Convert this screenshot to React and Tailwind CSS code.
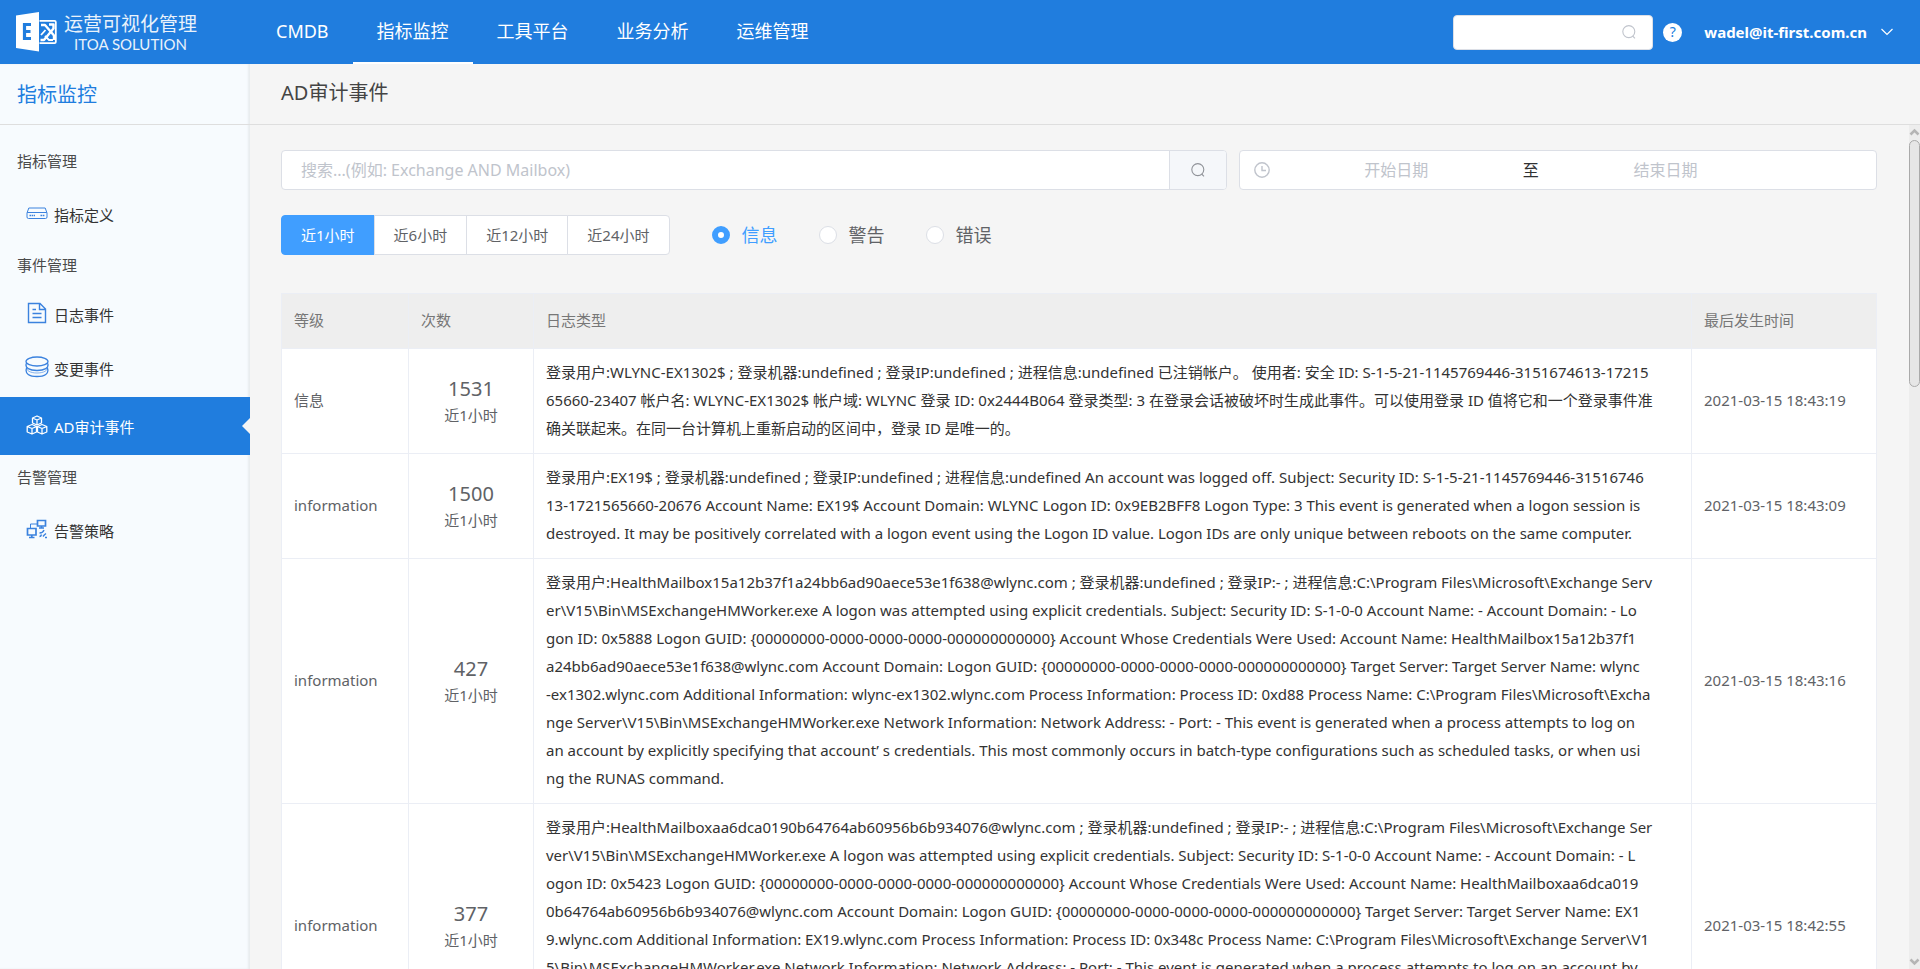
import { useState } from 'react'
import clsx from 'clsx'

const NAV = ['CMDB', '指标监控', '工具平台', '业务分析', '运维管理']
const RANGES = ['近1小时', '近6小时', '近12小时', '近24小时']
const LEVELS = ['信息', '警告', '错误']

const EVENTS = [
  {
    level: '信息',
    count: 1531,
    time: '2021-03-15 18:43:19',
    lines: [
      '登录用户:WLYNC-EX1302$ ; 登录机器:undefined ; 登录IP:undefined ; 进程信息:undefined 已注销帐户。 使用者: 安全 ID: S-1-5-21-1145769446-3151674613-17215',
      '65660-23407 帐户名: WLYNC-EX1302$ 帐户域: WLYNC 登录 ID: 0x2444B064 登录类型: 3 在登录会话被破坏时生成此事件。可以使用登录 ID 值将它和一个登录事件准',
      '确关联起来。在同一台计算机上重新启动的区间中，登录 ID 是唯一的。',
    ],
  },
  {
    level: 'information',
    count: 1500,
    time: '2021-03-15 18:43:09',
    lines: [
      '登录用户:EX19$ ; 登录机器:undefined ; 登录IP:undefined ; 进程信息:undefined An account was logged off. Subject: Security ID: S-1-5-21-1145769446-31516746',
      '13-1721565660-20676 Account Name: EX19$ Account Domain: WLYNC Logon ID: 0x9EB2BFF8 Logon Type: 3 This event is generated when a logon session is',
      'destroyed. It may be positively correlated with a logon event using the Logon ID value. Logon IDs are only unique between reboots on the same computer.',
    ],
  },
  {
    level: 'information',
    count: 427,
    time: '2021-03-15 18:43:16',
    lines: [
      '登录用户:HealthMailbox15a12b37f1a24bb6ad90aece53e1f638@wlync.com ; 登录机器:undefined ; 登录IP:- ; 进程信息:C:\\Program Files\\Microsoft\\Exchange Serv',
      'er\\V15\\Bin\\MSExchangeHMWorker.exe A logon was attempted using explicit credentials. Subject: Security ID: S-1-0-0 Account Name: - Account Domain: - Lo',
      'gon ID: 0x5888 Logon GUID: {00000000-0000-0000-0000-000000000000} Account Whose Credentials Were Used: Account Name: HealthMailbox15a12b37f1',
      'a24bb6ad90aece53e1f638@wlync.com Account Domain: Logon GUID: {00000000-0000-0000-0000-000000000000} Target Server: Target Server Name: wlync',
      '-ex1302.wlync.com Additional Information: wlync-ex1302.wlync.com Process Information: Process ID: 0xd88 Process Name: C:\\Program Files\\Microsoft\\Excha',
      'nge Server\\V15\\Bin\\MSExchangeHMWorker.exe Network Information: Network Address: - Port: - This event is generated when a process attempts to log on',
      'an account by explicitly specifying that account’ s credentials. This most commonly occurs in batch-type configurations such as scheduled tasks, or when usi',
      'ng the RUNAS command.',
    ],
  },
  {
    level: 'information',
    count: 377,
    time: '2021-03-15 18:42:55',
    lines: [
      '登录用户:HealthMailboxaa6dca0190b64764ab60956b6b934076@wlync.com ; 登录机器:undefined ; 登录IP:- ; 进程信息:C:\\Program Files\\Microsoft\\Exchange Ser',
      'ver\\V15\\Bin\\MSExchangeHMWorker.exe A logon was attempted using explicit credentials. Subject: Security ID: S-1-0-0 Account Name: - Account Domain: - L',
      'ogon ID: 0x5423 Logon GUID: {00000000-0000-0000-0000-000000000000} Account Whose Credentials Were Used: Account Name: HealthMailboxaa6dca019',
      '0b64764ab60956b6b934076@wlync.com Account Domain: Logon GUID: {00000000-0000-0000-0000-000000000000} Target Server: Target Server Name: EX1',
      '9.wlync.com Additional Information: EX19.wlync.com Process Information: Process ID: 0x348c Process Name: C:\\Program Files\\Microsoft\\Exchange Server\\V1',
      '5\\Bin\\MSExchangeHMWorker.exe Network Information: Network Address: - Port: - This event is generated when a process attempts to log on an account by',
      'explicitly specifying that account’ s credentials. This most commonly occurs in batch-type configurations such as scheduled tasks, or when using the RUN',
      'AS command.',
    ],
  },
]

function DriveIcon() {
  return (
    <svg width="22" height="22" viewBox="0 0 22 22" fill="none" stroke="currentColor" strokeWidth="1">
      <path d="M1 11 L2.8 6 H19.2 L21 11 V15 Q21 16.5 19.5 16.5 H2.5 Q1 16.5 1 15 Z M1.2 10.5 H20.8" />
      <path d="M3.5 13.5 H9 M14.5 13.5 H19" strokeWidth="1.6" strokeDasharray="1.6 0.6" />
    </svg>
  )
}

function FileIcon() {
  return (
    <svg width="22" height="22" viewBox="0 0 22 22" fill="none" stroke="currentColor" strokeWidth="1.4">
      <path d="M2.5 1.5 H14 L19.5 7 V20.5 H2.5 Z M13.5 1.5 V7.5 H19.5" />
      <path d="M6.5 7.5 H10 M6.5 11.5 H15.5 M6.5 15.5 H15.5" />
    </svg>
  )
}

function DatabaseIcon() {
  return (
    <svg width="24" height="22" viewBox="0 0 24 22" fill="none" stroke="currentColor" strokeWidth="1.3">
      <ellipse cx="12" cy="5.5" rx="11" ry="4.5" />
      <path d="M1.6 7 C-1 12 5 14.5 12 14.5 S25 12 22.4 7" />
      <path d="M1.8 11.5 C-1 18 5 20.5 12 20.5 S25 18 22.2 11.5" />
      <path d="M1.6 9.5 C0 15 6 17 12 17 S24 15 22.4 9.5" strokeWidth="0.6" />
    </svg>
  )
}

function CubesIcon() {
  return (
    <svg width="22" height="20" viewBox="0 0 22 20" fill="none" stroke="currentColor" strokeWidth="1.3" strokeLinejoin="round">
      <path d="M11 1 L15.5 3 V8 L11 10 L6.5 8 V3 Z M6.5 3 L11 5 L15.5 3 M11 5 V10" />
      <path d="M6 9.5 L10.5 11.5 V17 L6 19 L1.2 17 V11.5 Z M1.2 11.5 L6 13.5 L10.5 11.5 M6 13.5 V19" />
      <path d="M16 9.5 L20.8 11.5 V17 L16 19 L11.5 17 V11.5 Z M11.5 11.5 L16 13.5 L20.8 11.5 M16 13.5 V19" />
    </svg>
  )
}

function PolicyIcon() {
  return (
    <svg width="22" height="20" viewBox="0 0 22 20" fill="none" stroke="currentColor" strokeWidth="1.7">
      <path d="M11.5 1.5 H19.5 V7 H11.5 Z M15.5 7 V9 M13 9 H18" />
      <path d="M1.5 9.5 H10 V16 H1.5 Z M5.8 16 V18.3 M3 18.5 H8.5" />
      <path d="M4.5 9.5 V5 H11.5" strokeWidth="1" />
      <path d="M13.5 14 Q17 14 18 11 M13.5 17.5 Q15 17.5 15.5 15.5 M17 17.5 Q18 16 20 14.5 M19 18.5 H21" strokeWidth="1.4" />
    </svg>
  )
}

const MENU = [
  {
    title: '指标管理',
    items: [{ label: '指标定义', icon: DriveIcon, tall: true }],
  },
  {
    title: '事件管理',
    items: [
      { label: '日志事件', icon: FileIcon },
      { label: '变更事件', icon: DatabaseIcon },
      { label: 'AD审计事件', icon: CubesIcon, tall: true, active: true },
    ],
  },
  {
    title: '告警管理',
    items: [{ label: '告警策略', icon: PolicyIcon, tall: true }],
  },
]

function SearchIcon() {
  return (
    <svg width="14" height="14" viewBox="0 0 14 14" fill="none" stroke="currentColor" strokeWidth="1.1">
      <circle cx="6.8" cy="6.6" r="6" />
      <path d="M10.6 11 L13 13.4" />
    </svg>
  )
}

function Logo() {
  return (
    <a href="#" className="flex w-[250px] shrink-0 items-center pl-4 text-white">
      <svg width="42" height="40" viewBox="0 0 42 40" className="shrink-0">
        <path d="M23.5 8.8 H38.5 Q39.8 8.8 39.8 10 V30 Q39.8 31.2 38.5 31.2 H23.5" fill="none" stroke="#fff" strokeWidth="1.8" />
        <g fill="none" stroke="#fff" strokeWidth="2.4" strokeLinejoin="round">
          <path d="M25 13 H29 L38 23.5 V28" />
          <path d="M33 12.5 H37.5 V16.5 L28 28 H24.5" />
          <path d="M25 23 L29.5 18 M29 24 L33 28 H37" strokeWidth="1.8" />
        </g>
        <path d="M0 3.5 L23 0 V39.5 L0 36 Z" fill="#fff" />
        <path d="M15 12.5 H8.5 V26.5 H15 M8.5 19.5 H14.5" fill="none" stroke="#207dde" strokeWidth="3.2" />
      </svg>
      <span className="ml-1.5 flex flex-col items-center">
        <span className="text-[19px] leading-6 opacity-90">运营可视化管理</span>
        <span className="font-[Lato] text-[15px] leading-4 opacity-90">ITOA SOLUTION</span>
      </span>
    </a>
  )
}

function Header() {
  return (
    <header className="flex h-16 shrink-0 bg-[#207dde] text-white">
      <Logo />
      <nav className="ml-0.5 flex text-lg">
        {NAV.map((item) => (
          <a
            key={item}
            href="#"
            className={clsx(
              'flex items-center border-b-2 px-6',
              item === '指标监控' ? 'border-white' : 'border-transparent',
            )}
          >
            {item}
          </a>
        ))}
      </nav>
      <div className="ml-auto flex items-center pr-[27px]">
        <label className="flex h-[35px] w-[200px] items-center rounded border border-[#dcdfe6] bg-white pr-4 text-[#c0c4cc]">
          <input aria-label="搜索" className="min-w-0 flex-1 px-3 text-sm text-[#606266] outline-none" />
          <SearchIcon />
        </label>
        <button
          aria-label="帮助"
          className="ml-2.5 flex h-[19px] w-[19px] items-center justify-center rounded-full bg-white text-sm leading-none text-[#207dde]"
        >
          ?
        </button>
        <button className="ml-[22px] flex items-center gap-3.5 text-[15px] font-bold">
          wadel@it-first.com.cn
          <svg width="12" height="8" viewBox="0 0 12 8" fill="none" stroke="currentColor" strokeWidth="1.2">
            <path d="M0.5 1 L6 6.5 L11.5 1" />
          </svg>
        </button>
      </div>
    </header>
  )
}

function Sidebar() {
  return (
    <aside className="w-[250px] shrink-0 bg-[#f7fbfe] text-[15px] shadow-[inset_-2px_0_2px_#e8ecef]">
      <h2 className="mb-3.5 h-[61px] border-b border-[#dedede] pl-[17px] text-xl leading-[62px] text-[#207dde]">指标监控</h2>
      {MENU.map((group) => (
        <section key={group.title}>
          <h3 className="pb-0.5 pl-[17px] leading-[44px] text-[#4a4a4a]">{group.title}</h3>
          {group.items.map(({ label, icon: Icon, tall, active }) => (
            <a
              key={label}
              href="#"
              className={clsx(
                'relative flex items-center gap-1 pl-6',
                tall ? 'h-[58px] pt-0.5' : 'h-[54px] pb-0.5',
                active ? 'bg-[#207dde] text-white' : 'text-[#333]',
              )}
            >
              <span className={clsx('flex w-[26px] justify-center pb-1', !active && 'text-[#3b82de]')}>
                <Icon />
              </span>
              {label}
              {active && (
                <span className="absolute top-1/2 right-0 -translate-y-1/2 border-y-8 border-r-8 border-transparent border-r-[#f5f5f5]" />
              )}
            </a>
          ))}
        </section>
      ))}
    </aside>
  )
}

function Filters() {
  const [range, setRange] = useState('近1小时')
  const [level, setLevel] = useState('信息')

  return (
    <>
      <div className="flex gap-3">
        <div className="flex h-10 min-w-0 flex-1 overflow-hidden rounded border border-[#dcdfe6] bg-white">
          <input
            aria-label="搜索"
            placeholder="搜索...(例如: Exchange AND Mailbox)"
            className="min-w-0 flex-1 px-[19px] text-base text-[#606266] outline-none placeholder:text-[#c0c4cc]"
          />
          <button
            aria-label="搜索"
            className="flex w-[57px] items-center justify-center border-l border-[#dcdfe6] bg-[#f5f7fa] text-[#909399]"
          >
            <SearchIcon />
          </button>
        </div>
        <div className="flex h-10 w-2/5 shrink-0 items-center rounded border border-[#dcdfe6] bg-white px-3.5 text-base">
          <svg width="16" height="16" viewBox="0 0 16 16" fill="none" stroke="#c0c4cc" strokeWidth="1.4" className="shrink-0">
            <circle cx="8" cy="8" r="7.2" />
            <path d="M8 4 V8.5 H12" />
          </svg>
          <input
            aria-label="开始日期"
            placeholder="开始日期"
            className="ml-2 w-[39%] text-center outline-none placeholder:text-[#c0c4cc]"
          />
          <span className="w-8 text-center text-[#303133]">至</span>
          <input
            aria-label="结束日期"
            placeholder="结束日期"
            className="w-[39%] text-center outline-none placeholder:text-[#c0c4cc]"
          />
        </div>
      </div>

      <div className="mt-[25px] flex items-center">
        <div className="flex h-10 text-[15px]">
          {RANGES.map((r) => (
            <button
              key={r}
              onClick={() => setRange(r)}
              className={clsx(
                'border px-[19px] not-first:-ml-px first:rounded-l last:rounded-r',
                r === range ? 'border-[#409eff] bg-[#409eff] text-white' : 'border-[#dcdfe6] bg-white text-[#606266]',
              )}
            >
              {r}
            </button>
          ))}
        </div>
        <div className="ml-[42px] flex gap-[41px] text-lg">
          {LEVELS.map((l) => (
            <label key={l} className={clsx('flex items-center gap-3', l === level ? 'text-[#409eff]' : 'text-[#606266]')}>
              <input
                type="radio"
                name="level"
                checked={l === level}
                onChange={() => setLevel(l)}
                className="h-[18px] w-[18px] appearance-none rounded-full border border-[#dcdfe6] bg-white checked:border-[6px] checked:border-[#409eff]"
              />
              {l}
            </label>
          ))}
        </div>
      </div>
    </>
  )
}

function EventTable() {
  const cell = 'border-r border-b border-[#ebeef5] px-3'
  return (
    <table className="mt-[38px] w-full table-fixed border-separate border-spacing-0 border-t border-l border-[#ebeef5] bg-white text-[15px] text-[#606266]">
      <colgroup>
        <col className="w-[127px]" />
        <col className="w-[125px]" />
        <col />
        <col className="w-[185px]" />
      </colgroup>
      <thead>
        <tr className="h-[55px] bg-[#eee] text-left text-[#777]">
          {['等级', '次数', '日志类型', '最后发生时间'].map((h) => (
            <th key={h} className="border-r border-b border-[#ebeef5] px-3 pb-0.5 font-normal">
              {h}
            </th>
          ))}
        </tr>
      </thead>
      <tbody>
        {EVENTS.map((e) => (
          <tr key={e.time}>
            <td className={clsx(cell, 'pb-0.5')}>{e.level}</td>
            <td className={clsx(cell, 'text-center')}>
              <div className="text-xl leading-7">{e.count}</div>
              <div className="leading-6">近1小时</div>
            </td>
            <td className={clsx(cell, 'pt-[9px] pb-[11px] leading-7 whitespace-pre text-[#333]')}>
              {e.lines.map((line) => (
                <div key={line}>{line}</div>
              ))}
            </td>
            <td className={clsx(cell, 'pb-0.5')}>{e.time}</td>
          </tr>
        ))}
      </tbody>
    </table>
  )
}

function Scrollbar() {
  return (
    <div className="flex w-[11px] shrink-0 flex-col items-center bg-[#ededed] text-[#b5b5b5]">
      <svg width="11" height="15" viewBox="0 0 11 15" fill="none" stroke="currentColor" strokeWidth="2.5">
        <path d="M1.5 9.5 L5.5 5.5 L9.5 9.5" />
      </svg>
      <div className="h-[247px] w-full rounded-md border border-[#aaa] bg-[#e6e6e6]" />
      <svg width="11" height="15" viewBox="0 0 11 15" fill="none" stroke="currentColor" strokeWidth="2.5" className="mt-auto">
        <path d="M1.5 5.5 L5.5 9.5 L9.5 5.5" />
      </svg>
    </div>
  )
}

export default function App() {
  return (
    <div className="flex h-screen flex-col overflow-hidden bg-[#f5f5f5] font-['Noto_Sans','Noto_Sans_CJK_SC',sans-serif]">
      <Header />
      <div className="flex min-h-0 flex-1">
        <Sidebar />
        <main className="flex min-w-0 flex-1 flex-col">
          <h1 className="h-[61px] shrink-0 border-b border-[#dedede] pl-[31px] text-xl leading-[58px] text-[#444]">AD审计事件</h1>
          <div className="flex min-h-0 flex-1">
            <div className="min-w-0 flex-1 overflow-hidden pt-[25px] pr-8 pl-[31px]">
              <Filters />
              <EventTable />
            </div>
            <Scrollbar />
          </div>
        </main>
      </div>
    </div>
  )
}
